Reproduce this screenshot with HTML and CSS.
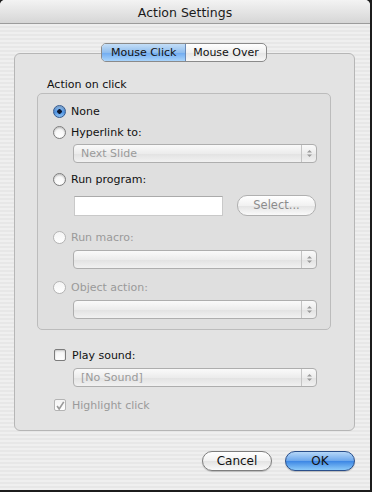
FILE: index.html
```html
<!DOCTYPE html>
<html lang="en">

<head>
    <meta charset="UTF-8">
    <meta name="viewport" content="width=device-width, initial-scale=1.0">
    <title>Action Settings</title>
    <link rel="stylesheet" href="styles.css">
</head>

<body>
    <div class="window">
        <div class="titlebar">Action Settings</div>

        <div class="tabs">
            <div class="tab active">Mouse Click</div>
            <div class="tab">Mouse Over</div>
        </div>

        <div class="tabbox">
            <div class="group-label">Action on click</div>
            <div class="group">
                <div class="opt first"><span class="radio checked"></span>None</div>
                <div class="opt"><span class="radio"></span>Hyperlink to:</div>
                <div class="popup disabled"><span class="popup-text">Next Slide</span><span class="arrows"><svg width="7" height="9" viewBox="0 0 7 9"><path d="M1 3.5 3.5 1 6 3.5ZM1 5.5 3.5 8 6 5.5Z" fill="#9a9a9a"/></svg></span></div>
                <div class="opt gap-lg"><span class="radio"></span>Run program:</div>
                <div class="field-row">
                    <div class="textfield"></div>
                    <div class="btn small disabled">Select...</div>
                </div>
                <div class="opt gap-xl dim"><span class="radio"></span>Run macro:</div>
                <div class="popup disabled"><span class="popup-text"></span><span class="arrows"><svg width="7" height="9" viewBox="0 0 7 9"><path d="M1 3.5 3.5 1 6 3.5ZM1 5.5 3.5 8 6 5.5Z" fill="#9a9a9a"/></svg></span></div>
                <div class="opt gap-md dim"><span class="radio"></span>Object action:</div>
                <div class="popup disabled"><span class="popup-text"></span><span class="arrows"><svg width="7" height="9" viewBox="0 0 7 9"><path d="M1 3.5 3.5 1 6 3.5ZM1 5.5 3.5 8 6 5.5Z" fill="#9a9a9a"/></svg></span></div>
            </div>

            <div class="opt sound"><span class="check"></span>Play sound:</div>
            <div class="popup disabled"><span class="popup-text">[No Sound]</span><span class="arrows"><svg width="7" height="9" viewBox="0 0 7 9"><path d="M1 3.5 3.5 1 6 3.5ZM1 5.5 3.5 8 6 5.5Z" fill="#9a9a9a"/></svg></span></div>
            <div class="opt gap-md dim"><span class="check"><svg width="12" height="12" viewBox="0 0 12 12"><path d="M2.5 6 5 9.5 10.5 1" fill="none" stroke="#9a9a9a" stroke-width="2"/></svg></span>Highlight click</div>
        </div>

        <div class="buttons">
            <div class="btn">Cancel</div>
            <div class="btn default">OK</div>
        </div>
    </div>
</body>

</html>
```
FILE: styles.css
```css
* {
    margin: 0;
    padding: 0;
    box-sizing: border-box;
}

body {
    width: 372px;
    height: 492px;
    background-color: #1c1c1c;
    font-family: "DejaVu Sans", "Liberation Sans", sans-serif;
    font-size: 11px;
    color: #111;
    overflow: hidden;
}

.window {
    width: 370px;
    height: 490px;
    display: flex;
    flex-direction: column;
    border-radius: 5px 5px 0 0;
    background: repeating-linear-gradient(#efefef 0 2px, #e7e7e7 2px 4px);
    overflow: hidden;
}

.titlebar {
    height: 24px;
    border-bottom: 1px solid #9c9c9c;
    background: linear-gradient(#f3f3f3, #d6d6d6);
    text-align: center;
    line-height: 25px;
    font-size: 12.5px;
    color: #1a1a1a;
}

/* segmented tabs sit on the top edge of the tab box */
.tabs {
    display: flex;
    align-self: center;
    margin-top: 19px;
    margin-bottom: -9px;
    margin-left: -2px;
    height: 19px;
    border: 1px solid #8a8a8a;
    border-radius: 5px;
    background: linear-gradient(#ffffff, #f0f0f0 50%, #e4e4e4 51%, #f7f7f7);
    position: relative;
    z-index: 1;
    overflow: hidden;
}

.tab {
    padding: 0 7px;
    line-height: 17px;
    font-size: 11px;
}

.tab.active {
    width: 84px;
    text-align: center;
    border-right: 1px solid #6a8bb8;
    background: linear-gradient(#c4def7, #8fbdee 50%, #6eaaf0 51%, #a9d4fb);
}

.tabbox {
    margin-left: 14px;
    width: 341px;
    height: 378px;
    border: 1px solid #b6b6b6;
    border-radius: 6px;
    background-color: #e3e3e3;
    padding: 24px 23px 0 22px;
}

.group-label {
    padding-left: 10px;
    line-height: 14px;
}

.group {
    margin-top: 1px;
    border: 1px solid #bcbcbc;
    border-radius: 5px;
    background-color: #dfdfdf;
    padding: 8px 13px 10px 15px;
    height: 237px;
}

.opt {
    display: flex;
    align-items: center;
    gap: 5px;
    height: 18px;
    margin-top: 3px;
}

.opt.first {
    margin-top: 0;
}

.opt.gap-lg {
    margin-top: 7px;
}

.opt.gap-xl {
    margin-top: 12px;
}

.opt.gap-md {
    margin-top: 9px;
}

.opt.dim {
    color: #9a9a9a;
}

.opt.sound {
    margin-top: 16px;
    padding-left: 17px;
}

.tabbox > .opt.dim {
    margin-left: 17px;
}

.radio {
    width: 13px;
    height: 13px;
    border-radius: 50%;
    border: 1px solid #7c7c7c;
    background: linear-gradient(#f4f4f4, #ffffff);
    box-shadow: inset 0 1px 2px rgba(0, 0, 0, 0.25);
    flex-shrink: 0;
}

.dim .radio {
    border-color: #b4b4b4;
    box-shadow: none;
}

.radio.checked {
    border-color: #34598e;
    background: radial-gradient(circle, #0d1a33 0 2px, transparent 2.5px), linear-gradient(#9ec9f4, #4f93e3 55%, #8fc4f5);
}

.check {
    width: 12px;
    height: 12px;
    border: 1px solid #7c7c7c;
    border-radius: 2px;
    background: linear-gradient(#f4f4f4, #ffffff);
    box-shadow: inset 0 1px 2px rgba(0, 0, 0, 0.2);
    flex-shrink: 0;
    display: flex;
    margin-right: 1px;
}

.dim .check {
    border-color: #b4b4b4;
    box-shadow: none;
}

.popup {
    margin: 3px 0 0 20px;
    height: 19px;
    display: flex;
    border: 1px solid #aeaeae;
    border-radius: 4px;
    background: linear-gradient(#fafafa, #ececec 50%, #e2e2e2 51%, #f1f1f1);
    color: #9a9a9a;
}

.group .popup:nth-of-type(n+4) {
    margin-top: 4px;
}

.tabbox > .popup {
    margin-top: 4px;
    margin-left: 36px;
    margin-right: 14px;
}

.popup-text {
    flex: 1;
    padding-left: 7px;
    line-height: 17px;
}

.arrows {
    width: 15px;
    border-left: 1px solid #c4c4c4;
    display: flex;
    align-items: center;
    justify-content: center;
}

.field-row {
    display: flex;
    align-items: center;
    gap: 14px;
    margin: 7px 0 0 21px;
}

.textfield {
    width: 149px;
    height: 20px;
    background-color: #fff;
    border: 1px solid #c9c9c9;
    border-top-color: #aaaaaa;
}

.btn {
    width: 70px;
    height: 20px;
    border: 1px solid #7d7d7d;
    border-radius: 10px;
    background: linear-gradient(#ffffff, #f1f1f1 50%, #e3e3e3 51%, #fafafa);
    text-align: center;
    line-height: 18px;
    font-size: 12px;
    box-shadow: 0 1px 1px rgba(0, 0, 0, 0.2);
}

.btn.small {
    width: 79px;
    height: 21px;
    font-size: 11.5px;
    color: #8c8c8c;
    border-color: #b0b0b0;
    box-shadow: none;
}

.btn.default {
    border-color: #2a4f8a;
    background: linear-gradient(#b6d7f8, #6aa6ec 50%, #3c86e4 51%, #8ccaf9);
}

.buttons {
    display: flex;
    justify-content: flex-end;
    gap: 13px;
    margin-top: 20px;
    padding-right: 15px;
}
```
